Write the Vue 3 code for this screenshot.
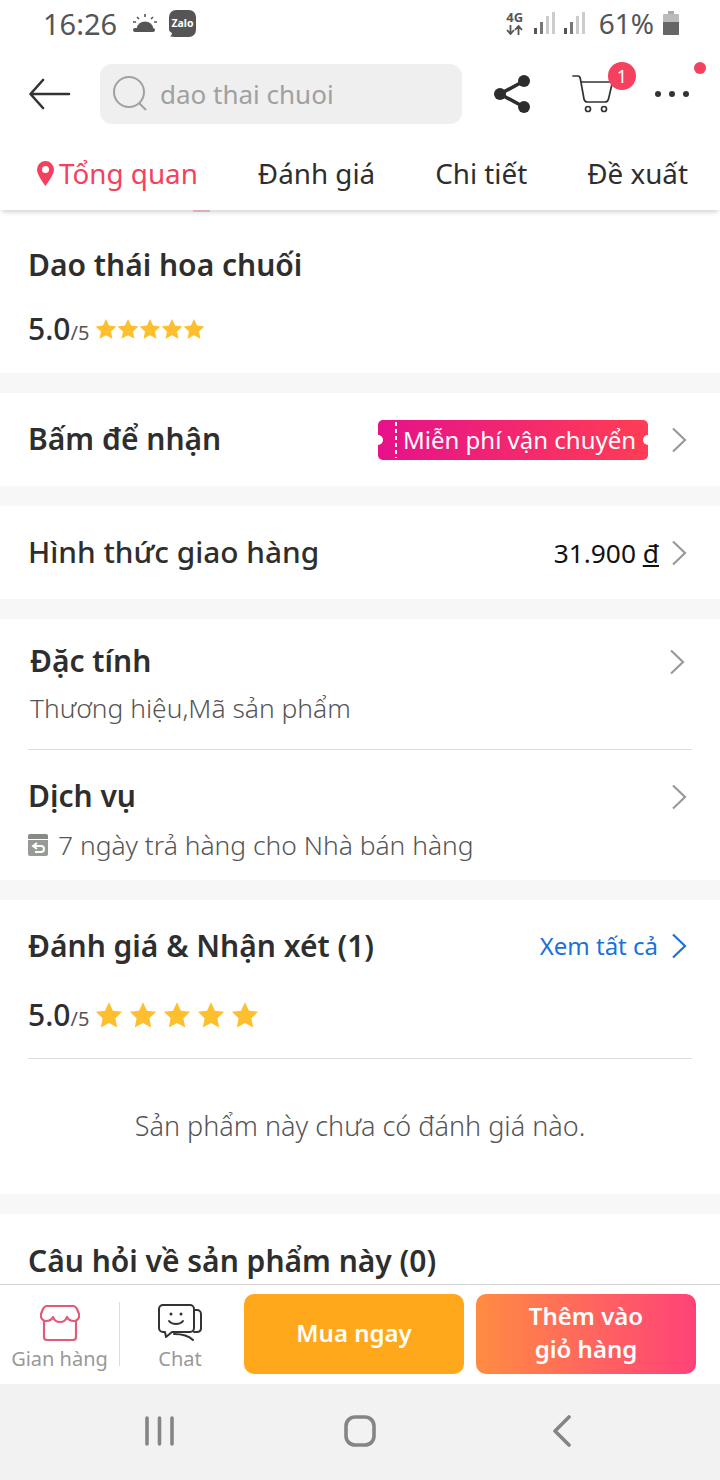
<template>
  <div class="page">
    <div class="status-bar">
      <div class="status-left">
        <span class="clock">16:26</span>
        <svg class="weather" width="26" height="20" viewBox="0 0 26 20">
          <path d="M5 15a8 6.500 0 0 1 16 0z" fill="#555" />
          <rect x="1" y="15" width="22" height="4" rx="2" fill="#555" />
          <path d="M13 1v3M5 4l2 2M21 4l-2 2M1 9h3M22 9h3" stroke="#555" stroke-width="1.600" />
        </svg>
        <svg class="zalo" width="27" height="27" viewBox="0 0 27 27">
          <path d="M7 0h13a7 7 0 0 1 7 7v13a7 7 0 0 1-7 7H7c-2 0-5-.5-6-.5 1-1 2-2 2-3.500C1 22 0 21 0 19V7a7 7 0 0 1 7-7z" fill="#555" />
          <text x="13.500" y="17" text-anchor="middle" font-size="10.500" font-weight="700" fill="#fff">Zalo</text>
        </svg>
      </div>
      <div class="status-right">
        <div class="net">
          <span>4G</span>
          <svg width="17" height="10" viewBox="0 0 17 10">
            <path d="M4.500 0v8M1 5l3.500 4L8 5M12.500 10V2M9 5l3.500-4L16 5" stroke="#555" stroke-width="1.800" fill="none" />
          </svg>
        </div>
        <svg class="signal" width="22" height="24" viewBox="0 0 22 24">
          <rect x="0" y="17" width="3" height="6" fill="#555" />
          <rect x="6" y="11" width="3" height="12" fill="#777" />
          <rect x="12" y="5" width="3" height="18" fill="#ccc" />
          <rect x="18" y="1" width="3" height="22" fill="#ccc" />
        </svg>
        <svg class="signal" width="22" height="24" viewBox="0 0 22 24">
          <rect x="0" y="17" width="3" height="6" fill="#555" />
          <rect x="6" y="11" width="3" height="12" fill="#777" />
          <rect x="12" y="5" width="3" height="18" fill="#ccc" />
          <rect x="18" y="1" width="3" height="22" fill="#ccc" />
        </svg>
        <span class="percent">61%</span>
        <svg class="battery" width="16" height="24" viewBox="0 0 16 24">
          <rect x="5" y="0" width="6" height="3" fill="#aaa" />
          <rect x="0" y="3" width="16" height="21" rx="1" fill="#bbb" />
          <path d="M0 11h16v12a1 1 0 0 1-1 1H1a1 1 0 0 1-1-1z" fill="#666" />
        </svg>
      </div>
    </div>

    <div class="header">
      <svg class="back" width="42" height="32" viewBox="0 0 42 32">
        <path d="M40 16H2M14 2 1.500 16 14 30" fill="none" stroke="#333" stroke-width="2.600" stroke-linecap="round" stroke-linejoin="round" />
      </svg>
      <div class="search">
        <svg width="36" height="36" viewBox="0 0 36 36">
          <circle cx="16" cy="16" r="15" fill="none" stroke="#a0a0a0" stroke-width="2" />
          <path d="M26 27l7 7" stroke="#a0a0a0" stroke-width="2" />
        </svg>
        <span>dao thai chuoi</span>
      </div>
      <svg class="share" width="38" height="38" viewBox="0 0 38 38">
        <path d="M31 6 7 19l24 13" fill="none" stroke="#2d2d2d" stroke-width="3.500" />
        <circle cx="7" cy="19" r="6" fill="#2d2d2d" />
        <circle cx="31" cy="6" r="6" fill="#2d2d2d" />
        <circle cx="31" cy="32" r="6" fill="#2d2d2d" />
      </svg>
      <div class="cart">
        <svg width="42" height="38" viewBox="0 0 42 38">
          <path d="M1 1h5c1.500 0 2 1 2.300 2.500L12 24c.4 2 1.500 3 3.500 3H33c2 0 3-1 3.500-3L40 9M9 7h31" fill="none" stroke="#333" stroke-width="1.700" stroke-linecap="round" />
          <circle cx="16" cy="34" r="2.500" fill="none" stroke="#333" stroke-width="1.700" />
          <circle cx="32" cy="34" r="2.500" fill="none" stroke="#333" stroke-width="1.700" />
        </svg>
        <span class="badge">1</span>
      </div>
      <div class="more">
        <i></i><i></i><i></i>
        <b class="dot"></b>
      </div>
    </div>

    <div class="tabs">
      <div class="tab active">
        <svg width="17" height="26" viewBox="0 0 17 26">
          <path d="M8.500 1A8.500 8.500 0 0 0 0 9.500C0 15 8.500 26 8.500 26S17 15 17 9.500A8.500 8.500 0 0 0 8.500 1z" fill="#f5405e" />
          <circle cx="8.500" cy="9.500" r="3.500" fill="#fff" />
        </svg>
        <span>Tổng quan</span>
      </div>
      <div class="tab">Đánh giá</div>
      <div class="tab">Chi tiết</div>
      <div class="tab">Đề xuất</div>
    </div>

    <div class="content">
      <section class="card product">
        <span class="peek"></span>
        <h1 class="title">Dao thái hoa chuối</h1>
        <div class="rating">
          <strong>5.0</strong><small>/5</small>
          <div class="stars">
            <svg v-for="n in 5" :key="n" width="22" height="22" viewBox="0 0 24 24">
              <path :d="starPath" fill="#fdbf2d" />
            </svg>
          </div>
        </div>
      </section>

      <section class="card row">
        <h2 class="title">Bấm để nhận</h2>
        <div class="row-end">
          <div class="coupon">
            <i class="notch left"></i>
            <span class="perforation"></span>
            <span>Miễn phí vận chuyển</span>
            <i class="notch right"></i>
          </div>
          <svg class="chevron" width="16" height="26" viewBox="0 0 16 26">
            <path :d="chevronPath" fill="none" stroke="#999" stroke-width="2.200" />
          </svg>
        </div>
      </section>

      <section class="card row">
        <h2 class="title medium">Hình thức giao hàng</h2>
        <div class="row-end">
          <span class="price">31.900 <u>đ</u></span>
          <svg class="chevron" width="16" height="26" viewBox="0 0 16 26">
            <path :d="chevronPath" fill="none" stroke="#999" stroke-width="2.200" />
          </svg>
        </div>
      </section>

      <section class="card info">
        <div class="info-block first">
          <div class="info-text">
            <h2 class="title indent">Đặc tính</h2>
            <p class="sub indent">Thương hiệu,Mã sản phẩm</p>
          </div>
          <svg class="chevron shift" width="16" height="26" viewBox="0 0 16 26">
            <path :d="chevronPath" fill="none" stroke="#999" stroke-width="2.200" />
          </svg>
        </div>
        <div class="info-block second">
          <div class="info-text">
            <h2 class="title">Dịch vụ</h2>
            <p class="sub service">
              <svg width="20" height="22" viewBox="0 0 20 22">
                <path d="M2 0h16a2 2 0 0 1 2 2v3H0V2a2 2 0 0 1 2-2z" fill="#858a85" />
                <path d="M0 6h20v14a2 2 0 0 1-2 2H2a2 2 0 0 1-2-2z" fill="#969b96" />
                <path d="M9 9 5 12l4 3M5.500 12H13a3 3 0 0 1 0 6H7" fill="none" stroke="#fff" stroke-width="2" />
              </svg>
              <span>7 ngày trả hàng cho Nhà bán hàng</span>
            </p>
          </div>
          <svg class="chevron" width="16" height="26" viewBox="0 0 16 26">
            <path :d="chevronPath" fill="none" stroke="#999" stroke-width="2.200" />
          </svg>
        </div>
      </section>

      <section class="card reviews">
        <div class="review-head">
          <h2 class="title">Đánh giá &amp; Nhận xét (1)</h2>
          <div class="row-end">
            <span class="see-all">Xem tất cả</span>
            <svg class="chevron" width="16" height="26" viewBox="0 0 16 26">
              <path :d="chevronPath" fill="none" stroke="#1a71d8" stroke-width="2.200" />
            </svg>
          </div>
        </div>
        <div class="rating big">
          <strong>5.0</strong><small>/5</small>
          <div class="stars">
            <svg v-for="n in 5" :key="n" width="28" height="28" viewBox="0 0 24 24">
              <path :d="starPath" fill="#fdbf2d" />
            </svg>
          </div>
        </div>
        <p class="empty">Sản phẩm này chưa có đánh giá nào.</p>
      </section>

      <section class="card questions">
        <h2 class="title">Câu hỏi về sản phẩm này (0)</h2>
      </section>
    </div>

    <div class="actions">
      <div class="action shop">
        <svg width="40" height="36" viewBox="0 0 40 36">
          <path d="M7 1h26c2 0 3 1 4 3l2 5c1 4-2 7-5 7s-6-2-7-4c-1 3-4 5-7 5s-6-2-7-5c-1 2-4 4-7 4s-6-3-5-7l2-5c1-2 2-3 4-3z" fill="none" stroke="#e25a75" stroke-width="2.200" stroke-linejoin="round" />
          <path d="M4 16v16a3 3 0 0 0 3 3h26a3 3 0 0 0 3-3V16" fill="none" stroke="#e25a75" stroke-width="2.200" />
        </svg>
        <span>Gian hàng</span>
      </div>
      <div class="action chat">
        <svg width="44" height="38" viewBox="0 0 44 38">
          <path d="M5 1h27a4 4 0 0 1 4 4v19a4 4 0 0 1-4 4H14l-6 5-1-5H5a4 4 0 0 1-4-4V5a4 4 0 0 1 4-4z" fill="#fff" stroke="#333" stroke-width="2" stroke-linejoin="round" />
          <path d="M36 6h3a4 4 0 0 1 4 4v15a4 4 0 0 1-4 3h-3M16 30c8 0 14 1 19 6" fill="none" stroke="#333" stroke-width="2" stroke-linecap="round" />
          <circle cx="13" cy="10" r="1.500" fill="#333" />
          <circle cx="23" cy="10" r="1.500" fill="#333" />
          <path d="M11 17c3 4 11 4 14 0" fill="none" stroke="#333" stroke-width="2" stroke-linecap="round" />
        </svg>
        <span>Chat</span>
      </div>
      <div class="btn buy">Mua ngay</div>
      <div class="btn add">Thêm vào<br />giỏ hàng</div>
    </div>

    <div class="nav">
      <svg width="30" height="32" viewBox="0 0 30 32">
        <path d="M2 3v26M14.500 3v26M27 3v26" stroke="#858585" stroke-width="3.600" stroke-linecap="round" />
      </svg>
      <svg class="home" width="32" height="32" viewBox="0 0 32 32">
        <rect x="2" y="2" width="28" height="28" rx="9" fill="none" stroke="#858585" stroke-width="3.600" />
      </svg>
      <svg width="20" height="32" viewBox="0 0 20 32">
        <path d="M17 2 3 16l14 14" fill="none" stroke="#858585" stroke-width="3.600" stroke-linecap="round" stroke-linejoin="round" />
      </svg>
    </div>
  </div>
</template>

<script setup>
const starPath = 'M12 1l3.400 7.300 7.900 1-5.800 5.500 1.500 7.900L12 18.800l-7 3.900 1.500-7.900L.7 9.300l7.900-1z'
const chevronPath = 'M2 1.500 14 13 2 24.500'
</script>

<style>
html,
body {
  margin: 0;
  background: #fff;
}
</style>

<style scoped>
.page {
  width: 720px;
  height: 1480px;
  overflow: hidden;
  display: flex;
  flex-direction: column;
  background: #fff;
  font-family: "Noto Sans", "Open Sans", sans-serif;
  color: #2e2e2e;
}

.status-bar {
  height: 50px;
  flex: none;
  display: flex;
  justify-content: space-between;
  align-items: center;
  padding: 0 41px 4px 43px;
  box-sizing: border-box;
  color: #555;
}

.status-left,
.status-right {
  display: flex;
  align-items: center;
}

.clock {
  font-size: 29px;
}

.weather {
  margin-left: 15px;
}

.zalo {
  margin-left: 11px;
}

.zalo text {
  font-family: "Noto Sans", sans-serif;
}

.net {
  width: 18px;
  display: flex;
  flex-direction: column;
  align-items: center;
  font-size: 13px;
  font-weight: 700;
  line-height: 13px;
  margin-right: 10px;
}

.net svg {
  display: block;
  margin-top: 1px;
}

.signal {
  margin-right: 8px;
}

.percent {
  font-size: 28px;
  margin-left: 5px;
  margin-right: 9px;
}

.header {
  height: 88px;
  flex: none;
  display: flex;
  align-items: center;
  padding: 0 0 0 29px;
  box-sizing: border-box;
  position: relative;
}

.back {
  flex: none;
}

.search {
  margin-left: 29px;
  width: 362px;
  height: 60px;
  border-radius: 12px;
  background: #efefef;
  display: flex;
  align-items: center;
  padding-left: 13px;
  box-sizing: border-box;
  color: #a0a0a0;
  font-size: 26px;
}

.search span {
  margin-left: 11px;
}

.share {
  margin-left: 31px;
}

.cart {
  margin-left: 41px;
  position: relative;
  height: 38px;
}

.badge {
  position: absolute;
  top: -13px;
  right: -22px;
  width: 28px;
  height: 28px;
  border-radius: 50%;
  background: #f5405e;
  color: #fff;
  font-size: 18px;
  line-height: 28px;
  text-align: center;
}

.more {
  margin-left: 41px;
  display: flex;
  gap: 8px;
  position: relative;
}

.more i {
  width: 6px;
  height: 6px;
  border-radius: 50%;
  background: #333;
}

.dot {
  position: absolute;
  top: -29px;
  right: -17px;
  width: 12px;
  height: 12px;
  border-radius: 50%;
  background: #f5405e;
}

.tabs {
  height: 72px;
  flex: none;
  display: flex;
  justify-content: space-between;
  align-items: center;
  padding: 0 32px 2px 37px;
  box-sizing: border-box;
  font-size: 27.800px;
  box-shadow: 0 4px 5px -2px rgba(0, 0, 0, 0.18);
  position: relative;
  z-index: 1;
}

.tab.active {
  color: #f5405e;
  display: flex;
  align-items: center;
  gap: 5px;
}

.content {
  flex: 1;
  min-height: 0;
  overflow: hidden;
  background: #f7f7f7;
  display: flex;
  flex-direction: column;
  gap: 20px;
}

.card {
  background: #fff;
  padding: 0 28px;
  flex: none;
}

.title {
  margin: 0;
  font-size: 30px;
  font-weight: 600;
  color: #2e2e2e;
}

.title.medium {
  font-weight: 500;
  font-size: 29.800px;
}

.product {
  height: 163px;
  padding-top: 34px;
  box-sizing: border-box;
  position: relative;
}

.peek {
  position: absolute;
  left: 193px;
  top: 0;
  width: 17px;
  height: 2px;
  background: #fbc4cd;
}

.rating {
  display: flex;
  align-items: baseline;
  margin-top: 23px;
}

.rating strong {
  font-size: 30px;
  font-weight: 500;
}

.rating small {
  font-size: 20px;
  color: #555;
}

.stars {
  display: flex;
  margin-left: 6px;
  align-self: center;
}

.stars svg {
  display: block;
}

.row {
  height: 93px;
  display: flex;
  align-items: center;
  justify-content: space-between;
}

.row .title {
  margin-bottom: 3px;
}

.row-end {
  display: flex;
  align-items: center;
  padding-right: 5px;
}

.chevron {
  margin-left: 23px;
  flex: none;
}

.coupon {
  width: 270px;
  height: 40px;
  border-radius: 5px;
  background: linear-gradient(90deg, #e6118a, #ff3d55);
  color: #fff;
  font-size: 24px;
  display: flex;
  align-items: center;
  padding-left: 25px;
  box-sizing: border-box;
  position: relative;
  white-space: nowrap;
}

.notch {
  position: absolute;
  top: 15px;
  width: 10px;
  height: 10px;
  border-radius: 50%;
  background: #fff;
}

.notch.left {
  left: -5px;
}

.notch.right {
  right: -5px;
}

.perforation {
  position: absolute;
  left: 17px;
  top: 2px;
  bottom: 2px;
  width: 2px;
  background: repeating-linear-gradient(180deg, #fff 0 4px, transparent 4px 7px);
}

.price {
  font-size: 26.300px;
  color: #111;
}

.price + .chevron {
  margin-left: 12px;
}

.info {
  height: 261px;
  display: flex;
  flex-direction: column;
}

.info-block {
  flex: 1;
  display: flex;
  justify-content: space-between;
}

.info-block.first {
  flex: none;
  height: 131px;
  border-bottom: 1px solid #ddd;
  box-sizing: border-box;
}

.info-text {
  padding-top: 21px;
}

.second .info-text {
  padding-top: 25px;
}

.title.indent {
  margin-left: 2px;
}

.sub {
  margin: 9px 0 0;
  font-size: 26.400px;
  font-weight: 300;
  color: #555;
}

.sub.indent {
  margin-left: 2px;
}

.sub.service {
  margin-top: 11px;
  display: flex;
  align-items: center;
  gap: 10px;
}

.info-block .chevron {
  margin-top: 30px;
  margin-right: 5px;
}

.info-block .chevron.shift {
  margin-right: 7px;
}

.second .chevron {
  margin-top: 34px;
}

.reviews {
  height: 294px;
  display: flex;
  flex-direction: column;
}

.review-head {
  display: flex;
  justify-content: space-between;
  align-items: center;
  padding-top: 25px;
}

.see-all {
  font-size: 24px;
  color: #1a71d8;
}

.reviews .chevron {
  margin-left: 13px;
}

.rating.big {
  margin-top: 28px;
  padding-bottom: 23px;
  border-bottom: 1px solid #ddd;
}

.rating.big .stars {
  gap: 6px;
}

.empty {
  margin: 48px 0 0;
  text-align: center;
  font-size: 27px;
  font-weight: 300;
  color: #555;
}

.questions {
  padding-top: 26px;
  height: 90px;
  box-sizing: border-box;
}

.actions {
  height: 100px;
  flex: none;
  display: flex;
  align-items: center;
  box-sizing: border-box;
  border-top: 1px solid #d5d5d5;
  background: #fff;
  position: relative;
  z-index: 1;
  padding: 0 24px 2px 0;
}

.action {
  width: 120px;
  height: 64px;
  display: flex;
  flex-direction: column;
  align-items: center;
  font-size: 20px;
  line-height: 26px;
  color: #999;
  box-sizing: border-box;
  gap: 5px;
}

.action.shop {
  border-right: 1px solid #ddd;
}

.action.chat {
  gap: 4px;
}

.action svg {
  margin-top: 3px;
  flex: none;
}

.action.chat svg {
  margin-top: 2px;
}

.action span {
  flex: none;
}

.btn {
  height: 80px;
  border-radius: 10px;
  color: #fff;
  font-size: 24px;
  font-weight: 600;
  line-height: 33px;
  text-align: center;
  display: flex;
  align-items: center;
  justify-content: center;
  padding-bottom: 4px;
  box-sizing: border-box;
}

.buy {
  width: 220px;
  margin-left: 4px;
  padding-bottom: 2px;
  background: #ffa81c;
}

.add {
  width: 220px;
  margin-left: 12px;
  background: linear-gradient(90deg, #ff8c42, #ff4278);
}

.nav {
  height: 96px;
  flex: none;
  background: #f2f2f2;
  display: flex;
  align-items: center;
  justify-content: space-between;
  padding: 0 148px 2px 144.500px;
  box-sizing: border-box;
}

.home {
  margin-right: 6px;
}
</style>
